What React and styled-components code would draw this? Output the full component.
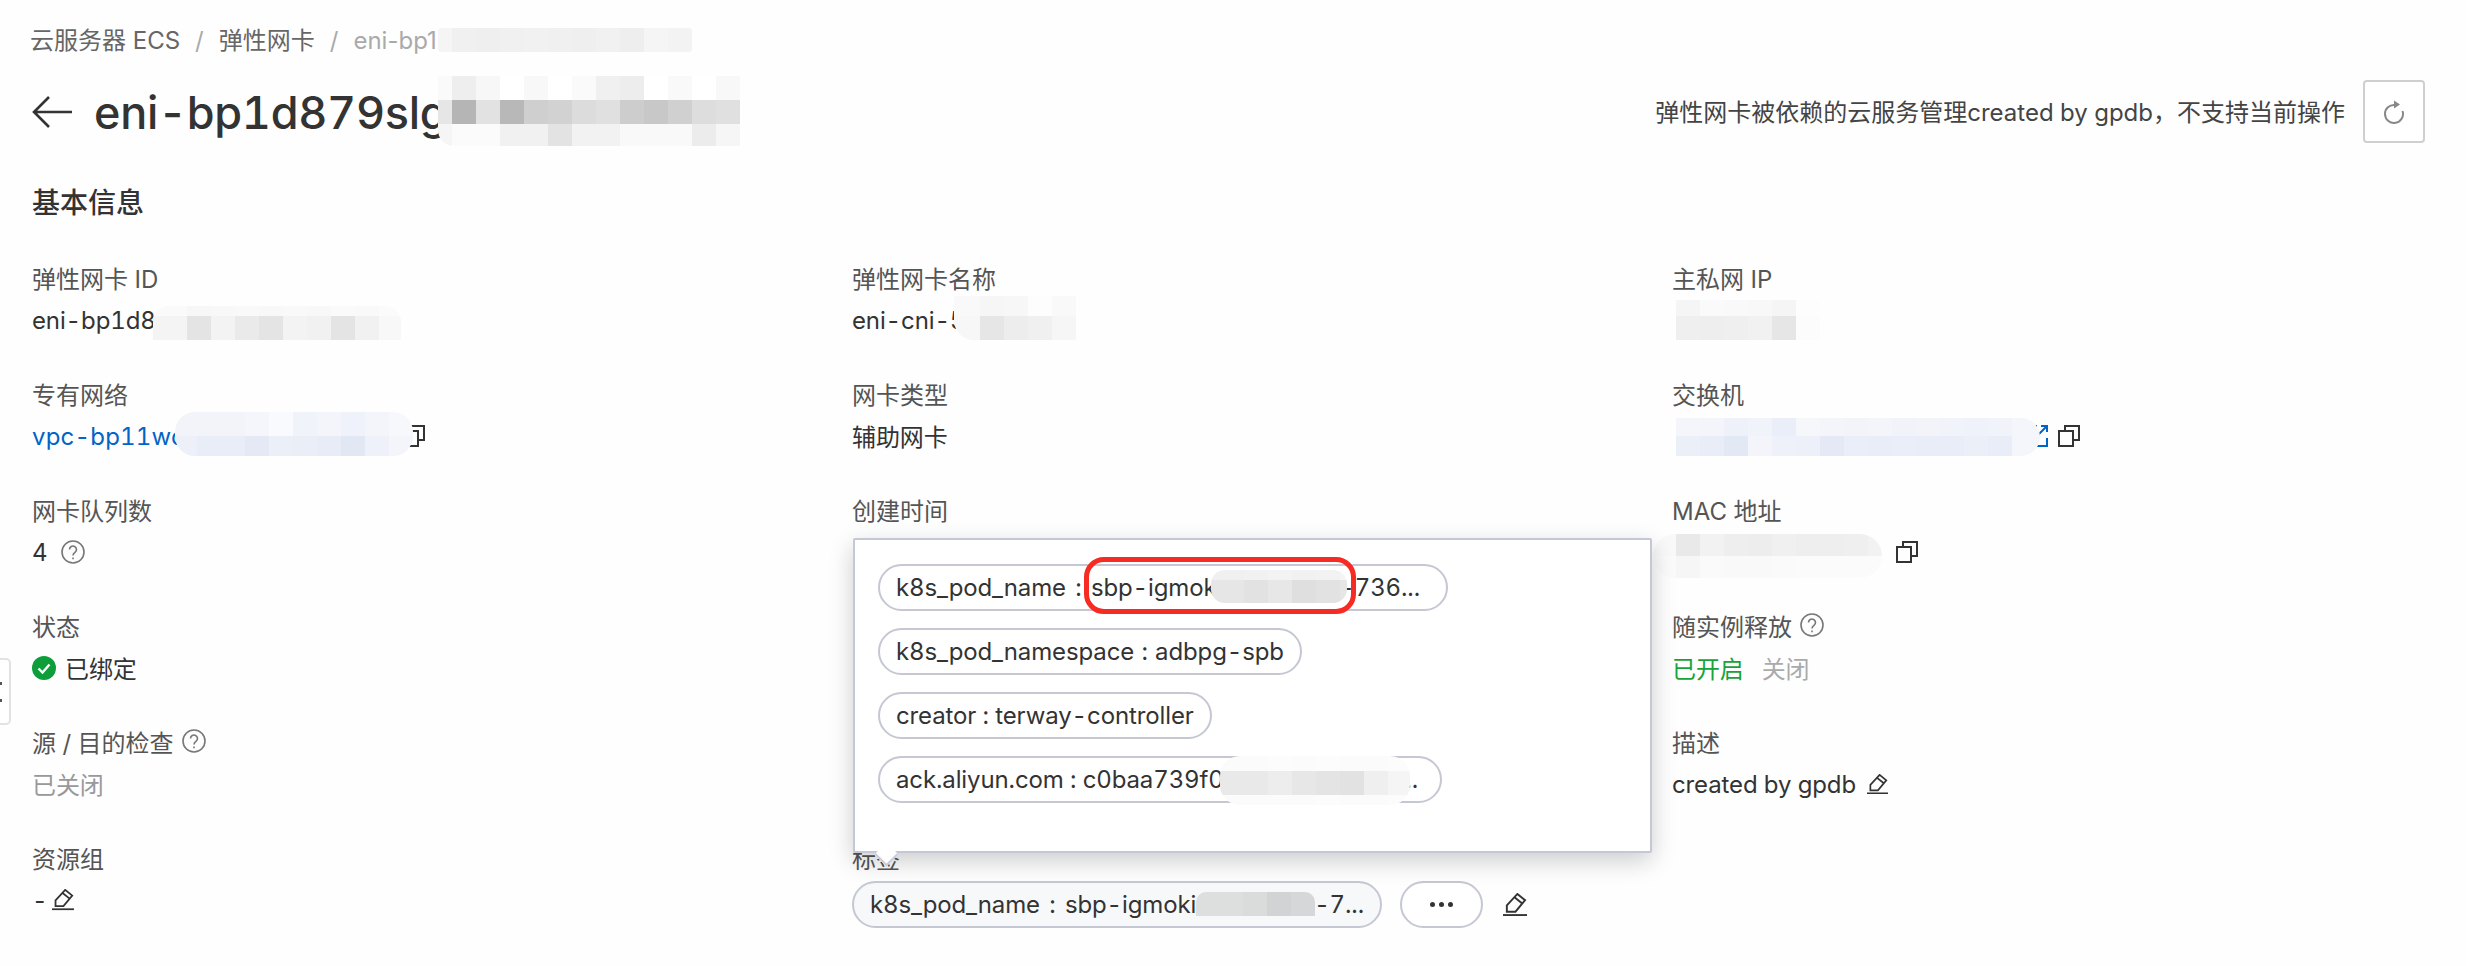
import React from "react";
import styled, { createGlobalStyle } from "styled-components";

const GlobalStyle = createGlobalStyle`
  html, body {
    margin: 0;
    background: #fefefe;
  }
  body {
    font-family: Inter, "Noto Sans CJK SC", sans-serif;
    font-size: 24px;
    font-feature-settings: "tnum";
    color: #333;
    overflow: hidden;
  }
`;

const Page = styled.div`
  position: relative;
  height: 966px;
  padding: 20px 41px 0 32px;
  box-sizing: border-box;
`;

const Breadcrumb = styled.div`
  position: relative;
  display: flex;
  align-items: center;
  height: 42px;
  line-height: 42px;
  margin-left: -2px;
  color: #666;
`;

const Crumb = styled.span`
  color: ${p => (p.$current ? "#aaa" : "#666")};
  font-feature-settings: normal;
`;

const Slash = styled.span`
  color: #aaa;
  margin: 0 15px;
`;

const TitleRow = styled.div`
  display: flex;
  align-items: center;
  justify-content: space-between;
  height: 63px;
  margin-top: 18px;
`;

const TitleLeft = styled.div`
  position: relative;
  display: flex;
  align-items: center;
  gap: 22px;
`;

const Title = styled.h1`
  margin: 2px 0 0;
  font-size: 45px;
  line-height: 61px;
  font-weight: 500;
  letter-spacing: -0.3px;
  white-space: nowrap;
  color: #333;
`;

const Actions = styled.div`
  display: flex;
  align-items: center;
  gap: 18px;
`;

const Notice = styled.span`
  color: #444;
  padding-bottom: 2px;
`;

const RefreshButton = styled.button`
  display: flex;
  align-items: center;
  justify-content: center;
  width: 62px;
  height: 63px;
  padding: 0;
  background: #fff;
  border: 2px solid #cfcfcf;
  border-radius: 4px;
  color: #888;
`;

const SectionTitle = styled.h2`
  margin: 39px 0 0;
  font-size: 28px;
  line-height: 42px;
  font-weight: 500;
  color: #333;
`;

const InfoGrid = styled.div`
  display: grid;
  grid-template-columns: repeat(3, 820px);
  grid-auto-rows: 116px;
  margin-top: 33px;
`;

const Item = styled.div`
  position: relative;
`;

const Label = styled.div`
  display: flex;
  align-items: center;
  gap: 8px;
  box-sizing: border-box;
  height: 42px;
  padding-bottom: 2px;
  color: #555;
`;

const Value = styled.div`
  position: relative;
  display: flex;
  align-items: center;
  height: 42px;
  letter-spacing: -0.12px;
  color: #333;
`;

const Cjk = styled.span`
  margin-bottom: 2px;
  margin-left: ${p => p.$ml || 0}px;
  color: ${p => p.$color || "#333"};
`;

const Link = styled.span`
  color: #0064c8;
  letter-spacing: 0.2px;
`;

const IconSlot = styled.span`
  display: inline-flex;
  margin-left: ${p => p.$ml || 0}px;
`;

const Popover = styled.div`
  position: absolute;
  left: 1px;
  top: -299px;
  z-index: 2;
  box-sizing: border-box;
  width: 799px;
  height: 315px;
  padding: 24px 23px;
  display: flex;
  flex-direction: column;
  align-items: flex-start;
  gap: 17px;
  background: #fff;
  border: 2px solid #c3c7d6;
  border-radius: 2px;
  box-shadow: 0 8px 24px rgba(0, 0, 0, 0.2);
`;

const Caret = styled.span`
  position: absolute;
  left: 23px;
  bottom: -12px;
  box-sizing: border-box;
  width: 17px;
  height: 17px;
  background: #fff;
  border-right: 2px solid #c9ccd9;
  border-bottom: 2px solid #c9ccd9;
  transform: rotate(45deg);
`;

const Chip = styled.div`
  position: relative;
  box-sizing: border-box;
  display: flex;
  align-items: center;
  justify-content: space-between;
  width: ${p => (p.$width ? `${p.$width}px` : "auto")};
  height: 47px;
  padding: 0 ${p => p.$pr || 16}px 0 16px;
  white-space: nowrap;
  letter-spacing: -0.12px;
  word-spacing: ${p => p.$ws || 0}px;
  color: #333;
  background: ${p => (p.$filled ? "#f7f8fa" : "#fff")};
  border: 2px solid #c5c8d3;
  border-radius: 24px;
`;

const MoreButton = styled(Chip)`
  width: 83px;
  padding: 0;
  justify-content: center;
  gap: 4px;
  background: #fff;
`;

const Dot = styled.i`
  width: 5px;
  height: 5px;
  border-radius: 50%;
  background: #333;
`;

const TagRow = styled.div`
  display: flex;
  align-items: center;
  gap: 18px;
  margin-top: 2px;
`;

const RedMark = styled.div`
  position: absolute;
  left: 229px;
  top: 17px;
  z-index: 3;
  box-sizing: border-box;
  width: 272px;
  height: 57px;
  border: 5px solid #f52b24;
  border-radius: 20px;
`;

const SideHandle = styled.div`
  position: absolute;
  left: -2px;
  top: 658px;
  box-sizing: border-box;
  width: 13px;
  height: 67px;
  display: flex;
  flex-direction: column;
  align-items: flex-start;
  justify-content: center;
  gap: 14px;
  background: #fff;
  border: 2px solid #e2e2e2;
  border-radius: 0 5px 5px 0;
`;

const HandleDot = styled.i`
  width: 2px;
  height: 3px;
  background: #555;
`;

const MosaicBox = styled.div`
  position: absolute;
  left: ${p => p.$x}px;
  top: ${p => p.$y}px;
  z-index: 1;
  display: grid;
  grid-template-columns: ${p => p.$first}px repeat(${p => p.$count}, 24px) ${p => p.$last}px;
  grid-template-rows: ${p => p.$rows};
  overflow: hidden;
  border-radius: ${p => p.$radius || "0"};
`;

// pixelated blur patches that cover the private ids
const Mosaic = ({ x, y, first = 24, last = 24, rows, heights, radius }) => (
  <MosaicBox
    $x={x}
    $y={y}
    $first={first}
    $last={last}
    $count={rows[0].length - 2}
    $rows={heights.map(h => `${h}px`).join(" ")}
    $radius={radius}
  >
    {rows.flat().map((c, i) => (
      <div key={i} style={{ background: c }} />
    ))}
  </MosaicBox>
);

const ArrowIcon = () => (
  <svg width="40" height="32" viewBox="0 0 40 32" fill="none" stroke="#333" strokeWidth="2.6">
    <path d="M40 16H2M17 1L2 16l15 15" />
  </svg>
);

const RefreshIcon = () => (
  <svg width="22" height="24" viewBox="0 0 22 24" fill="none">
    <path d="M12 5A9 9 0 1 0 19.500 11" stroke="currentColor" strokeWidth="2" />
    <path d="M11 0.500L17 4.500L11 8.500z" fill="currentColor" />
  </svg>
);

const HelpIcon = () => (
  <svg width="24" height="24" viewBox="0 0 24 24" fill="none" stroke="#777" strokeWidth="1.6">
    <circle cx="12" cy="12" r="11" />
    <path d="M8.500 9.500a3.500 3.500 0 1 1 5.500 2.900c-1.300.9-2 1.500-2 3" />
    <path d="M12 17.500v1.800" />
  </svg>
);

const PencilIcon = ({ w = 21 }) => (
  <svg width={w} height={(w * 24) / 25} viewBox="0 0 25 24" fill="none" stroke="#333" strokeWidth="2">
    <path d="M4 13L15 1l8 6.500L13 19.500H4z" />
    <path d="M12 4.500l8 6.500" />
    <path d="M0 23h25" />
  </svg>
);

const CopyIcon = () => (
  <svg width="22" height="22" viewBox="0 0 22 22" fill="none" stroke="#333" strokeWidth="2">
    <rect x="1" y="6" width="14" height="15" />
    <path d="M7 6V1h14v14h-6" />
  </svg>
);

const OpenIcon = () => (
  <svg width="21" height="22" viewBox="0 0 21 22" fill="none" stroke="#0064c8" strokeWidth="2">
    <path d="M20 13v8H1V1h9" />
    <path d="M14 1h6v6M20 1L10 11" />
  </svg>
);

const CheckIcon = () => (
  <svg width="24" height="24" viewBox="0 0 24 24">
    <circle cx="12" cy="12" r="12" fill="#0d9e3a" />
    <path d="M6.500 12.500l4 4 7-8" fill="none" stroke="#fff" strokeWidth="2.400" />
  </svg>
);

export default function App() {
  return (
    <Page>
      <GlobalStyle />
      <SideHandle>
        <HandleDot />
        <HandleDot />
      </SideHandle>

      <Breadcrumb>
        <Crumb>云服务器 ECS</Crumb>
        <Slash>/</Slash>
        <Crumb>弹性网卡</Crumb>
        <Slash>/</Slash>
        <Crumb $current>eni-bp1</Crumb>
        <Mosaic
          x={408}
          y={8}
          first={14}
          heights={[24]}
          radius="3px"
          rows={[["#f5f5f5", "#f0f0f0", "#efefef", "#f0f0f0", "#f1f1f1", "#f0f0f0", "#efefef", "#f1f1f1", "#eeeeee", "#f5f5f5", "#f3f3f3"]]}
        />
      </Breadcrumb>

      <TitleRow>
        <TitleLeft>
          <ArrowIcon />
          <Title>eni-bp1d879slg</Title>
          <Mosaic
            x={406}
            y={-4}
            first={14}
            heights={[24, 24, 22]}
            radius="0 0 0 16px"
            rows={[
              ["#fafafa", "#eeeeee", "#f7f7f7", "#ffffff", "#f8f8f8", "#ffffff", "#fafafa", "#f0f0f0", "#ededed", "#ffffff", "#f9f9f9", "#ffffff", "#f8f8f8"],
              ["#e6e6e6", "#b5b5b5", "#e2e2e2", "#b8b8b8", "#cfcfcf", "#d2d2d2", "#dcdcdc", "#e0e0e0", "#cdcdcd", "#c8c8c8", "#d0d0d0", "#dddddd", "#e0e0e0"],
              ["#f5f5f5", "#fbfbfb", "#fbfbfb", "#f1f1f1", "#f1f1f1", "#e3e3e3", "#f2f2f2", "#f2f2f2", "#f9f9f9", "#f9f9f9", "#f9f9f9", "#ececec", "#f6f6f6"],
            ]}
          />
        </TitleLeft>
        <Actions>
          <Notice>弹性网卡被依赖的云服务管理created by gpdb，不支持当前操作</Notice>
          <RefreshButton>
            <RefreshIcon />
          </RefreshButton>
        </Actions>
      </TitleRow>

      <SectionTitle>基本信息</SectionTitle>

      <InfoGrid>
        <Item>
          <Label>弹性网卡 ID</Label>
          <Value>
            eni-bp1d879
            <Mosaic
              x={121}
              y={7}
              first={34}
              last={22}
              heights={[10, 24]}
              radius="16px 16px 0 0"
              rows={[
                ["#fafafa", "#f7f7f7", "#f8f8f8", "#f9f9f9", "#f8f8f8", "#f9f9f9", "#f8f8f8", "#fafafa", "#f9f9f9", "#fbfbfb"],
                ["#f4f4f4", "#e4e4e4", "#f3f3f3", "#eaeaea", "#e4e4e4", "#f3f3f3", "#f1f1f1", "#e4e4e4", "#f1f1f1", "#f8f8f8"],
              ]}
            />
          </Value>
        </Item>
        <Item>
          <Label>弹性网卡名称</Label>
          <Value>
            eni-cni-5
            <Mosaic
              x={102}
              y={-3}
              first={26}
              heights={[20, 24]}
              radius="0 0 0 20px"
              rows={[
                ["#f9f9f9", "#f6f6f6", "#f7f7f7", "#fdfdfd", "#f9f9f9"],
                ["#f7f7f7", "#e6e6e6", "#ededed", "#f0f0f0", "#f6f6f6"],
              ]}
            />
          </Value>
        </Item>
        <Item>
          <Label>主私网 IP</Label>
          <Value>
            <Mosaic
              x={4}
              y={1}
              heights={[16, 24]}
              first={24}
              rows={[
                ["#f5f5f5", "#fafafa", "#f9f9f9", "#f8f8f8", "#f5f5f5", "#fdfdfd"],
                ["#efefef", "#eeeeee", "#efefef", "#f1f1f1", "#e6e6e6", "#fcfcfc"],
              ]}
            />
          </Value>
        </Item>

        <Item>
          <Label>专有网络</Label>
          <Value>
            <Link>vpc-bp11wd</Link>
            <IconSlot $ml={217}>
              <CopyIcon />
            </IconSlot>
            <Mosaic
              x={143}
              y={-3}
              first={22}
              heights={[24, 20]}
              radius="20px"
              rows={[
                ["#f2f4fa", "#f3f4f9", "#f2f4fa", "#f5f6fb", "#f9fafd", "#f1f3fa", "#f3f5fa", "#eff2fa", "#f3f5fa", "#f7f8fb"],
                ["#edf0f8", "#e9edf7", "#e9edf7", "#e4e9f5", "#ebeff8", "#eaeef7", "#e8ecf6", "#e2e7f4", "#eef1f9", "#f3f5fa"],
              ]}
            />
          </Value>
        </Item>
        <Item>
          <Label>网卡类型</Label>
          <Value>
            <Cjk>辅助网卡</Cjk>
          </Value>
        </Item>
        <Item>
          <Label>交换机</Label>
          <Value>
            <IconSlot $ml={355}>
              <OpenIcon />
            </IconSlot>
            <IconSlot $ml={10}>
              <CopyIcon />
            </IconSlot>
            <Mosaic
              x={4}
              y={3}
              first={24}
              last={28}
              heights={[18, 20]}
              radius="0 20px 20px 0"
              rows={[
                ["#f4f6fb", "#f3f5fa", "#eef1f9", "#f1f3fa", "#eaeef8", "#f5f7fb", "#f3f5fa", "#f2f4fa", "#f3f5fa", "#f1f3fa", "#f2f4fa", "#f1f3fa", "#eff2fa", "#f1f3fa", "#f4f6fb"],
                ["#ebeff8", "#e9edf7", "#e3e8f5", "#f3f5fb", "#eef1f9", "#edf0f9", "#e5e9f5", "#eaeef8", "#e9edf7", "#eaeef8", "#e9edf7", "#e9edf7", "#ebeff8", "#e9edf7", "#f4f6fb"],
              ]}
            />
          </Value>
        </Item>

        <Item>
          <Label>网卡队列数</Label>
          <Value>
            4
            <IconSlot $ml={14}>
              <HelpIcon />
            </IconSlot>
          </Value>
        </Item>
        <Item>
          <Label>创建时间</Label>
        </Item>
        <Item>
          <Label>MAC 地址</Label>
          <Value>
            <IconSlot $ml={224}>
              <CopyIcon />
            </IconSlot>
            <Mosaic
              x={-19}
              y={3}
              first={23}
              last={14}
              heights={[22, 22]}
              radius="22px"
              rows={[
                ["#f9f9f9", "#e9e9e9", "#f2f2f2", "#eeeeee", "#ededed", "#f0f0f0", "#eeeeee", "#eeeeee", "#efefef", "#f2f2f2"],
                ["#fbfbfb", "#f6f6f6", "#fafafa", "#f9f9f9", "#f9f9f9", "#fafafa", "#fbfbfb", "#fbfbfb", "#fbfbfb", "#fbfbfb"],
              ]}
            />
          </Value>
        </Item>

        <Item>
          <Label>状态</Label>
          <Value>
            <CheckIcon />
            <Cjk $ml={9}>已绑定</Cjk>
          </Value>
        </Item>
        <Item />
        <Item>
          <Label>
            随实例释放
            <HelpIcon />
          </Label>
          <Value>
            <Cjk $color="#17a33a">已开启</Cjk>
            <Cjk $color="#aaa" $ml={18}>关闭</Cjk>
          </Value>
        </Item>

        <Item>
          <Label>
            源 / 目的检查
            <HelpIcon />
          </Label>
          <Value>
            <Cjk $color="#999">已关闭</Cjk>
          </Value>
        </Item>
        <Item />
        <Item>
          <Label>描述</Label>
          <Value>
            created by gpdb
            <IconSlot $ml={11}>
              <PencilIcon />
            </IconSlot>
          </Value>
        </Item>

        <Item>
          <Label>资源组</Label>
          <Value>
            -
            <IconSlot $ml={5}>
              <PencilIcon w={22} />
            </IconSlot>
          </Value>
        </Item>
        <Item>
          <Label>标签</Label>
          <Popover>
            <Chip $width={570} $pr={26} $ws={3}>
              <span>k8s_pod_name : sbp-igmok</span>
              <span>-736...</span>
              <Mosaic
                x={331}
                y={4}
                first={33}
                last={7}
                heights={[10, 23]}
                radius="14px"
                rows={[
                  ["#f0f0f0", "#f1f1f1", "#f3f3f3", "#f1f1f1", "#f2f2f2", "#f4f4f4"],
                  ["#e6e6e6", "#e2e2e2", "#e7e7e7", "#dfdfdf", "#e2e2e2", "#e6e6e6"],
                ]}
              />
            </Chip>
            <Chip $ws={1}>k8s_pod_namespace : adbpg-spb</Chip>
            <Chip>creator : terway-controller</Chip>
            <Chip $width={564} $pr={22}>
              <span>ack.aliyun.com : c0baa739f0</span>
              <span>...</span>
              <Mosaic
                x={340}
                y={-2}
                first={48}
                last={22}
                heights={[15, 24, 10]}
                radius="20px"
                rows={[
                  ["#fbfbfb", "#fcfcfc", "#fbfbfb", "#fcfcfc", "#fbfbfb", "#fbfbfb", "#fcfcfc"],
                  ["#e9e9e9", "#ededed", "#e7e7e7", "#e4e4e4", "#e2e2e2", "#efefef", "#f5f5f5"],
                  ["#fbfbfb", "#fbfbfb", "#fbfbfb", "#fcfcfc", "#fbfbfb", "#fbfbfb", "#fcfcfc"],
                ]}
              />
            </Chip>
            <RedMark />
            <Caret />
          </Popover>
          <TagRow>
            <Chip $width={530} $filled $pr={16} $ws={3}>
              <span>k8s_pod_name : sbp-igmoki</span>
              <span>-7...</span>
              <Mosaic
                x={342}
                y={9}
                first={47}
                heights={[24]}
                radius="10px 10px 0 0"
                rows={[["#dddede", "#dadbdb", "#d2d3d4", "#d6d7d8"]]}
              />
            </Chip>
            <MoreButton as="div">
              <Dot />
              <Dot />
              <Dot />
            </MoreButton>
            <IconSlot $ml={2}>
              <PencilIcon w={24} />
            </IconSlot>
          </TagRow>
        </Item>
        <Item />
      </InfoGrid>
    </Page>
  );
}
